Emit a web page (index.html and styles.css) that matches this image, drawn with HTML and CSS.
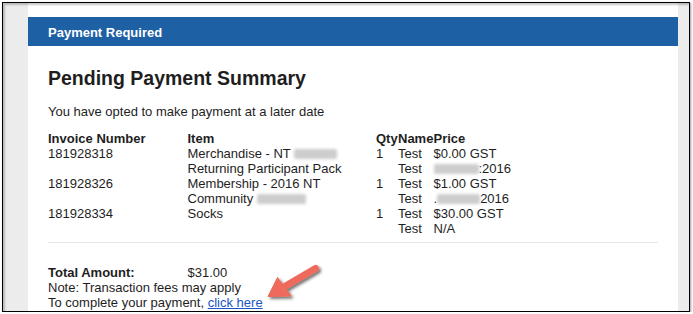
FILE: index.html
```html
<!DOCTYPE html>
<html lang="en">
<head>
    <meta charset="UTF-8">
    <meta name="viewport" content="width=device-width, initial-scale=1.0">
    <title>Payment Required</title>
    <link rel="stylesheet" href="styles.css">
</head>
<body>

    <div class="frame">
        <div class="side side-left"></div>

        <div class="content">
            <div class="bar">Payment Required</div>

            <div class="inner">
                <h2>Pending Payment Summary</h2>
                <p class="intro">You have opted to make payment at a later date</p>

                <div class="orders">
                    <div class="th">Invoice Number</div>
                    <div class="th">Item</div>
                    <div class="th">Qty</div>
                    <div class="th">Name</div>
                    <div class="th">Price</div>

                    <div>181928318</div>
                    <div>Merchandise - NT <span class="blur w43"></span><br>Returning Participant Pack</div>
                    <div>1</div>
                    <div>Test<br>Test</div>
                    <div>$0.00 GST<br><span class="blur w45"></span>:2016</div>

                    <div>181928326</div>
                    <div>Membership - 2016 NT<br>Community <span class="blur w49"></span></div>
                    <div>1</div>
                    <div>Test<br>Test</div>
                    <div>$1.00 GST<br>.<span class="blur w43"></span>2016</div>

                    <div>181928334</div>
                    <div>Socks</div>
                    <div>1</div>
                    <div>Test<br>Test</div>
                    <div>$30.00 GST<br>N/A</div>
                </div>

                <hr class="divider">

                <div class="total">
                    <div class="th">Total Amount:</div>
                    <div>$31.00</div>
                </div>
                <div>Note: Transaction fees may apply</div>
                <div>To complete your payment, <a href="#">click here</a></div>
            </div>
        </div>

        <div class="side side-right"></div>

        <!-- callout arrow pointing at the link -->
        <svg class="arrow" width="75" height="50" viewBox="255 258 75 50">
            <defs>
                <filter id="shadow" x="-30%" y="-30%" width="160%" height="160%">
                    <feDropShadow dx="2" dy="2" stdDeviation="1.4" flood-color="#000" flood-opacity="0.55"/>
                </filter>
            </defs>
            <g filter="url(#shadow)" fill="#ee6a5b" stroke="#ee6a5b">
                <line x1="315.5" y1="268.5" x2="283" y2="287.5" stroke-width="7" stroke-linecap="round"/>
                <polygon points="268,296.5 277.5,277.5 291,296" stroke-width="1" stroke-linejoin="round"/>
            </g>
        </svg>
    </div>

</body>
</html>
```

FILE: styles.css
```css
body {
    font-family: "Liberation Sans", Arial, Helvetica, sans-serif;
    font-size: 13px;
    line-height: 15px;
    color: #1e1e1e;
    margin: 0;
    padding: 0;
    background-color: #fff;
}
.frame {
    position: relative;
    display: flex;
    width: 686px;
    height: 308px;
    margin: 2px 0 0 2px;
    border: 1px solid #000;
    background-color: #ececec;
    box-shadow: 1px 1px 2px rgba(0, 0, 0, 0.4);
    overflow: hidden;
}
.frame::after {
    content: "";
    position: absolute;
    top: 0;
    left: 0;
    right: 0;
    bottom: 0;
    box-shadow: inset 2px 2px 2px rgba(0, 0, 0, 0.22);
    pointer-events: none;
}
.side-left {
    width: 25px;
    flex-shrink: 0;
}
.side-right {
    width: 11px;
    flex-shrink: 0;
}
.content {
    width: 650px;
    flex-shrink: 0;
    background-color: #fff;
    padding-top: 14px;
}
.bar {
    background-color: #1d60a4;
    color: #fff;
    font-weight: bold;
    padding: 8px 20px 6px;
}
.inner {
    padding: 0 20px;
}
h2 {
    font-size: 19.5px;
    line-height: 22px;
    margin: 21px 0 0;
}
.intro {
    margin: 14.5px 0 0;
}
.orders {
    display: grid;
    grid-template-columns: 139.5px 188.5px 22px 35.5px auto;
    margin-top: 12px;
}
.th {
    font-weight: bold;
}
.blur {
    display: inline-block;
    height: 10px;
    vertical-align: -1px;
    background-color: #cdcdcd;
    border-radius: 2px;
    filter: blur(1.6px);
}
.w43 { width: 43px; }
.w45 { width: 45px; }
.w49 { width: 49px; }
.divider {
    border: 0;
    border-top: 1px solid #e6e6e6;
    margin: 6.5px 0 0;
}
.total {
    display: grid;
    grid-template-columns: 139.5px auto;
    margin-top: 21.5px;
}
a {
    color: #1a55c4;
    text-decoration: underline;
}
.arrow {
    position: absolute;
    left: 252px;
    top: 255px;
    pointer-events: none;
}
```
